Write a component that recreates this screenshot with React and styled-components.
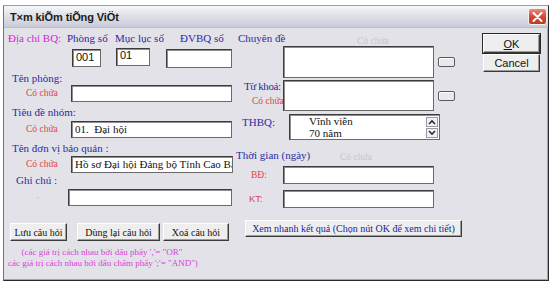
import styled, { createGlobalStyle } from "styled-components";

const GlobalStyle = createGlobalStyle`
  html, body {
    margin: 0;
    padding: 0;
    background: #ffffff;
    font-family: "Liberation Serif", "Times New Roman", serif;
  }
  body {
    width: 554px;
    height: 284px;
    overflow: hidden;
  }
`;

const serif = '"Liberation Serif", "Times New Roman", serif';
const sans = '"Liberation Sans", Arial, sans-serif';

const Window = styled.div`
  box-sizing: border-box;
  margin: 5px 0 0 3px;
  width: 546px;
  height: 276px;
  border: 1px solid #2b2b2b;
  border-top-color: #9a9daa;
  border-left-color: #6f717c;
  background: #e2e2e8;
  display: flex;
  flex-direction: column;
  box-shadow: inset -1px -1px 0 #a3a3aa;
  font-family: ${serif};
`;

const TitleBar = styled.div`
  height: 21px;
  display: flex;
  align-items: center;
  padding: 0 1px 0 6px;
  background: linear-gradient(#f6f7fa, #dfe1ea 45%, #c9ccd9);
  border-bottom: 1px solid #b9bcc8;
`;

const Title = styled.div`
  flex: 1;
  font-family: ${sans};
  font-weight: bold;
  font-size: 11px;
  color: #1a1a1a;
  letter-spacing: -0.1px;
`;

const CloseBtn = styled.div`
  width: 19px;
  height: 17px;
  border-radius: 3px;
  border: 1px solid #f3f3f3;
  box-sizing: border-box;
  background: linear-gradient(#e98a7a, #d2462e 55%, #c23a22);
  display: flex;
  align-items: center;
  justify-content: center;
`;

const Body = styled.div`
  flex: 1;
  display: flex;
  padding-left: 4px;
`;

const LeftCol = styled.div`
  width: 225px;
  display: flex;
  flex-direction: column;
`;

const RightCol = styled.div`
  width: 227px;
  margin-left: 3px;
  display: flex;
  flex-direction: column;
`;

const ButtonCol = styled.div`
  width: 57px;
  margin-left: 20px;
  display: flex;
  flex-direction: column;
`;

const LabelCell = styled.div`
  width: 47px;
  flex-shrink: 0;
  display: flex;
  flex-direction: column;
`;

const Label = styled.div`
  font-family: ${serif};
  font-size: 11px;
  line-height: 12px;
  color: ${(p) => (p.$pink ? "#d61ed6" : "#2b2ba0")};
  width: ${(p) => (p.$w ? `${p.$w}px` : "auto")};
  padding-left: ${(p) => p.$pl || 0}px;
  margin-top: ${(p) => p.$mt || 0}px;
  letter-spacing: ${(p) => (p.$tight ? "-0.4px" : "normal")};
  white-space: nowrap;
  flex-shrink: 0;
`;

const Hint = styled.div`
  font-size: 9.5px;
  line-height: 11px;
  color: ${(p) => (p.$faint ? "#c6c6ce" : "#e04646")};
  font-family: ${(p) => (p.$sans ? sans : serif)};
  width: ${(p) => (p.$w ? `${p.$w}px` : "auto")};
  padding-left: ${(p) => p.$pl || 0}px;
  margin-top: ${(p) => p.$mt || 0}px;
  box-sizing: border-box;
  white-space: nowrap;
  flex-shrink: 0;
`;

const Row = styled.div`
  display: flex;
  align-items: ${(p) => p.$align || "flex-start"};
  margin-top: ${(p) => p.$mt || 0}px;
  height: ${(p) => (p.$h ? `${p.$h}px` : "auto")};
`;

const TextBox = styled.div`
  box-sizing: border-box;
  width: ${(p) => p.$w}px;
  height: ${(p) => p.$h || 17}px;
  margin-left: ${(p) => p.$ml || 0}px;
  margin-top: ${(p) => p.$mt || 0}px;
  background: #ffffff;
  border: 1px solid #3c3c3c;
  border-right-color: #6a6a6a;
  border-bottom-color: #6a6a6a;
  box-shadow: inset 1px 1px 0 #8e8e8e;
  padding: ${(p) => (p.$top ? "0 3px" : "1px 3px")};
  font-size: 11px;
  line-height: 13px;
  color: #111;
  font-family: ${(p) => (p.$sans ? sans : serif)};
  white-space: nowrap;
  overflow: hidden;
  flex-shrink: 0;
`;

const Button = styled.div`
  box-sizing: border-box;
  width: ${(p) => p.$w}px;
  height: ${(p) => p.$h || 18}px;
  margin-left: ${(p) => p.$ml || 0}px;
  margin-top: ${(p) => p.$mt || 0}px;
  background: #eeeeee;
  border: 1px solid;
  border-color: #ffffff #3a3a3a #3a3a3a #ffffff;
  box-shadow: inset -1px -1px 0 #9c9c9c,
    ${(p) => (p.$default ? "0 0 0 1px #2a2a2a" : "0 0 0 0 transparent")};
  display: flex;
  align-items: center;
  justify-content: center;
  font-size: ${(p) => (p.$sans ? 11 : 10)}px;
  font-family: ${(p) => (p.$sans ? sans : serif)};
  color: ${(p) => (p.$blue ? "#22229a" : "#111")};
  white-space: nowrap;
  flex-shrink: 0;
`;

const SmallBtn = styled.div`
  box-sizing: border-box;
  width: 17px;
  height: 10px;
  margin-left: 4px;
  background: #e9e9ec;
  border: 1px solid #5a5a5a;
  border-radius: 2px;
  box-shadow: inset 1px 1px 0 #ffffff;
  align-self: center;
`;

const ListBox = styled(TextBox)`
  position: relative;
  padding: 0 0 0 19px;
  line-height: 12px;
  white-space: normal;
`;

const ScrollArrows = styled.div`
  position: absolute;
  right: 1px;
  top: 2px;
  display: flex;
  flex-direction: column;
  gap: 1px;
`;

const Arrow = styled.div`
  width: 12px;
  height: 10px;
  box-sizing: border-box;
  background: #f1f1f4;
  border: 1px solid #9a9aa6;
  display: flex;
  align-items: center;
  justify-content: center;
`;

const Notes = styled.div`
  width: 188px;
  margin-top: 6px;
  text-align: center;
  font-family: ${serif};
  font-size: 9px;
  line-height: 11px;
  color: #dd3ddd;
  white-space: nowrap;
`;

const Chevron = ({ up }) => (
  <svg width="8" height="6" viewBox="0 0 8 6">
    <path
      d={up ? "M1 5 L4 2 L7 5" : "M1 1 L4 4 L7 1"}
      fill="none"
      stroke="#2a2a3a"
      strokeWidth="1.6"
    />
  </svg>
);

export default function App() {
  return (
    <>
      <GlobalStyle />
      <Window>
        <TitleBar>
          <Title>T×m kiÕm tiÕng ViÖt</Title>
          <CloseBtn>
            <svg width="11" height="10" viewBox="0 0 11 10">
              <path
                d="M1.5 1 L9.5 9 M9.5 1 L1.5 9"
                stroke="#ffffff"
                strokeWidth="2"
                strokeLinecap="round"
              />
            </svg>
          </CloseBtn>
        </TitleBar>
        <Body>
          <LeftCol>
            <Row $mt={4} $h={12}>
              <Label $pink $w={59}>Địa chỉ BQ:</Label>
              <Label $w={48}>Phòng số</Label>
              <Label $w={65}>Mục lục số</Label>
              <Label>ĐVBQ số</Label>
            </Row>
            <Row $mt={5}>
              <TextBox $sans $w={29} $h={18} $ml={64}>001</TextBox>
              <TextBox $sans $top $w={34} $h={18} $ml={15} $mt={-1}>01</TextBox>
              <TextBox $w={66} $h={19} $ml={16} />
            </Row>
            <Label $mt={4} $pl={4}>Tên phòng:</Label>
            <Row $mt={1} $align="center">
              <Hint $w={63} $pl={18}>Có chứa</Hint>
              <TextBox $w={161} />
            </Row>
            <Label $mt={4} $pl={4}>Tiêu đề nhóm:</Label>
            <Row $mt={3} $align="center">
              <Hint $w={63} $pl={18}>Có chứa</Hint>
              <TextBox $w={161}>01.&nbsp; Đại hội</TextBox>
            </Row>
            <Label $mt={4} $pl={4}>Tên đơn vị bảo quản :</Label>
            <Row $mt={2} $align="center">
              <Hint $w={63} $pl={18}>Có chứa</Hint>
              <TextBox $w={162}>Hồ sơ Đại hội Đảng bộ Tỉnh Cao Bằng</TextBox>
            </Row>
            <Label $mt={1} $pl={8}>Ghi chú :</Label>
            <Row $mt={3} $align="center">
              <Hint $faint $w={60} $pl={28}>-</Hint>
              <TextBox $w={164} />
            </Row>
            <Row $mt={17}>
              <Button $w={57} $ml={2}>Lưu câu hỏi</Button>
              <Button $w={83} $ml={10}>Dùng lại câu hỏi</Button>
              <Button $w={66} $ml={3}>Xoá câu hỏi</Button>
            </Row>
            <Notes>
              (các giá trị cách nhau bởi dấu phẩy ','= "OR"
              <br />
              các giá trị cách nhau bởi dấu chấm phẩy ';'= "AND")
            </Notes>
          </LeftCol>

          <RightCol>
            <Row $mt={4} $h={14}>
              <Label $w={119} $pl={2}>Chuyên đề</Label>
              <Hint $faint $mt={4}>Có chứa</Hint>
            </Row>
            <Row $align="center">
              <LabelCell />
              <TextBox $w={151} $h={32} />
              <SmallBtn />
            </Row>
            <Row $mt={2}>
              <LabelCell>
                <Label $pl={8} $tight>Từ khoá:</Label>
                <Hint $pl={16} $mt={4}>Có chứa</Hint>
              </LabelCell>
              <TextBox $w={151} $h={31} />
              <SmallBtn />
            </Row>
            <Row $mt={3}>
              <Label $w={47} $pl={6} $mt={2}>THBQ:</Label>
              <ListBox $w={151} $h={26}>
                Vĩnh viễn
                <br />
                70 năm
                <ScrollArrows>
                  <Arrow>
                    <Chevron up />
                  </Arrow>
                  <Arrow>
                    <Chevron />
                  </Arrow>
                </ScrollArrows>
              </ListBox>
            </Row>
            <Row $mt={9}>
              <Label $w={104}>Thời gian (ngày)</Label>
              <Hint $faint $mt={3}>Có chứa</Hint>
            </Row>
            <Row $mt={3}>
              <Hint $w={47} $pl={15} $mt={4}>BĐ:</Hint>
              <TextBox $w={151} $h={18} />
            </Row>
            <Row $mt={6}>
              <Hint $sans $w={47} $pl={13} $mt={3}>KT:</Hint>
              <TextBox $w={151} $h={18} />
            </Row>
            <Row $mt={12}>
              <Button $blue $w={217} $h={17} $ml={9}>
                Xem nhanh kết quả (Chọn nút OK để xem chi tiết)
              </Button>
            </Row>
          </RightCol>

          <ButtonCol>
            <Button $sans $default $w={57} $h={19} $mt={6}>
              <u>O</u>K
            </Button>
            <Button $sans $w={57} $h={18} $mt={1}>
              Cancel
            </Button>
          </ButtonCol>
        </Body>
      </Window>
    </>
  );
}
